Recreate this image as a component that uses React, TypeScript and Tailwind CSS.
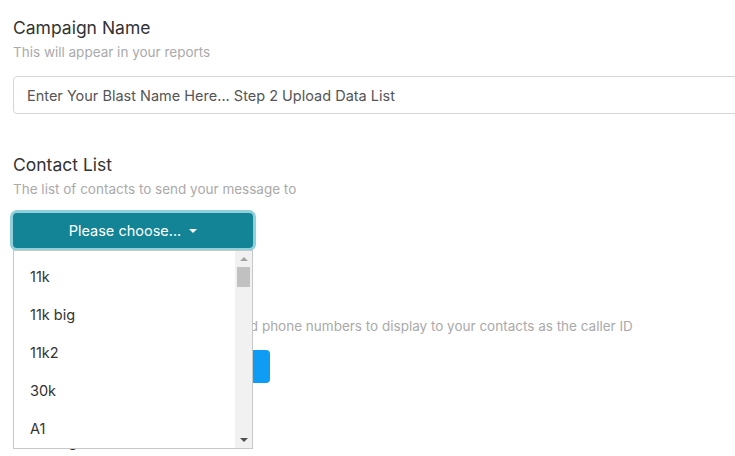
import { useState } from "react";

const contactLists = ["11k", "11k big", "11k2", "30k", "A1", "A2", "B1"];

function Caret() {
  return (
    <span className="inline-block ml-[8px] align-middle border-t-[4px] border-t-white border-x-[4px] border-x-transparent" />
  );
}

export default function App() {
  const [name, setName] = useState("Enter Your Blast Name Here... Step 2 Upload Data List");

  return (
    <div className="min-h-screen bg-white pl-[13px] pt-[15px] font-['Inter','Liberation_Sans',sans-serif] overflow-hidden">
      {/* Campaign Name */}
      <div>
        <h2 className="text-[17.5px] leading-[26px] text-[#333]">Campaign Name</h2>
        <p className="text-[13.5px] leading-[20px] text-[#aaa] mt-[1px]">This will appear in your reports</p>
        <input
          value={name}
          onChange={(e) => setName(e.target.value)}
          className="mt-[14px] w-[740px] h-[38px] px-[13px] text-[14.5px] text-[#555] border border-[#d6d6d6] rounded-l-[4px] outline-none"
        />
      </div>

      {/* Contact List */}
      <div className="mt-[38px] relative">
        <h2 className="text-[17.5px] leading-[26px] text-[#333]">Contact List</h2>
        <p className="text-[13.5px] leading-[20px] text-[#aaa] mt-[1px]">The list of contacts to send your message to</p>
        <button className="mt-[14px] w-[240px] h-[35px] rounded-[4px] bg-[#138496] text-white text-[14.5px] ring-[3px] ring-[#8fd0da] flex items-center justify-center">
          Please choose...
          <Caret />
        </button>

        {/* open dropdown */}
        <div className="absolute z-10 left-0 top-[98px] w-[240px] h-[199px] bg-white border border-[#c8c8c8] flex">
          <ul className="flex-1 pt-[7px]">
            {contactLists.slice(0, 5).map((item) => (
              <li key={item} className="h-[38px] flex items-center pl-[16px] text-[14.5px] text-[#333]">
                {item}
              </li>
            ))}
          </ul>
          <div className="w-[17px] bg-[#f1f1f1] flex flex-col items-center">
            <div className="h-[16px] flex items-center justify-center">
              <span className="border-b-[4px] border-b-[#a3a3a3] border-x-[4px] border-x-transparent" />
            </div>
            <div className="w-[13px] h-[20px] bg-[#c1c1c1]" />
            <div className="flex-1" />
            <div className="h-[16px] flex items-center justify-center">
              <span className="border-t-[4px] border-t-[#505050] border-x-[4px] border-x-transparent" />
            </div>
          </div>
        </div>
      </div>

      {/* Caller ID */}
      <div className="mt-[41px]">
        <h2 className="text-[17.5px] leading-[26px] text-[#333]">Caller ID</h2>
        <p className="text-[13.5px] leading-[20px] text-[#aaa] mt-[1px]">
          <span className="tracking-[0.1px]">Select one or more of your purchase</span>d phone numbers to display to your contacts as the caller ID
        </p>
        <button className="mt-[14px] w-[257px] h-[33px] rounded-[4px] bg-[#0e9cf5] text-white text-[14.5px] flex items-center justify-center">
          Select numbers
          <Caret />
        </button>
      </div>

      {/* Message */}
      <div className="mt-[44px]">
        <h2 className="text-[17.5px] leading-[26px] text-[#333]">Message</h2>
      </div>
    </div>
  );
}
